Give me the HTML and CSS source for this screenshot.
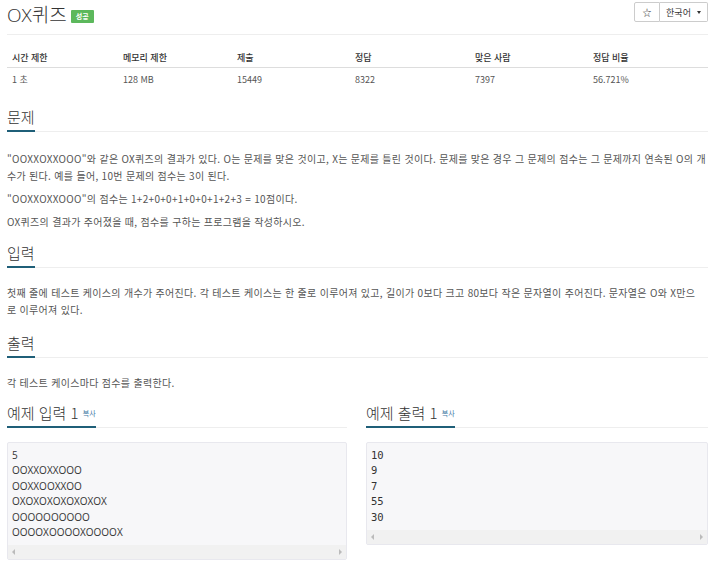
FILE: index.html
```html
<!DOCTYPE html>
<html lang="ko">
<head>
<meta charset="utf-8">
<link rel="stylesheet" href="styles.css">
</head>
<body>
<div class="page">
  <div class="top">
    <h1 class="title">OX퀴즈 <span class="badge">성공</span></h1>
    <div class="btn-group">
      <span class="btn star">☆</span>
      <span class="btn lang">한국어 <span class="caret"></span></span>
    </div>
  </div>

  <div class="stats">
    <div class="th">시간 제한</div><div class="th">메모리 제한</div><div class="th">제출</div><div class="th">정답</div><div class="th">맞은 사람</div><div class="th">정답 비율</div>
    <div class="td">1 초</div><div class="td">128 MB</div><div class="td">15449</div><div class="td">8322</div><div class="td">7397</div><div class="td">56.721%</div>
  </div>

  <section class="sec sec-problem">
    <div class="headline"><h2>문제</h2></div>
    <div class="body">
      <p>"OOXXOXXOOO"와 같은 OX퀴즈의 결과가 있다. O는 문제를 맞은 것이고, X는 문제를 틀린 것이다. 문제를 맞은 경우 그 문제의 점수는 그 문제까지 연속된 O의 개수가 된다. 예를 들어, 10번 문제의 점수는 3이 된다.</p>
      <p>"OOXXOXXOOO"의 점수는 1+2+0+0+1+0+0+1+2+3 = 10점이다.</p>
      <p>OX퀴즈의 결과가 주어졌을 때, 점수를 구하는 프로그램을 작성하시오.</p>
    </div>
  </section>

  <section class="sec sec-input">
    <div class="headline"><h2>입력</h2></div>
    <div class="body">
      <p>첫째 줄에 테스트 케이스의 개수가 주어진다. 각 테스트 케이스는 한 줄로 이루어져 있고, 길이가 0보다 크고 80보다 작은 문자열이 주어진다. 문자열은 O와 X만으로 이루어져 있다.</p>
    </div>
  </section>

  <section class="sec sec-output">
    <div class="headline"><h2>출력</h2></div>
    <div class="body">
      <p>각 테스트 케이스마다 점수를 출력한다.</p>
    </div>
  </section>

  <div class="samples">
    <section class="sample">
      <div class="headline"><h2>예제 입력 1 <a class="copy">복사</a></h2></div>
      <div class="pre sans">
        <div class="code">5
OOXXOXXOOO
OOXXOOXXOO
OXOXOXOXOXOXOX
OOOOOOOOOO
OOOOXOOOOXOOOOX</div>
        <div class="scroll"><span class="arr l"></span><span class="arr r"></span></div>
      </div>
    </section>
    <section class="sample">
      <div class="headline"><h2>예제 출력 1 <a class="copy">복사</a></h2></div>
      <div class="pre mono">
        <div class="code">10
9
7
55
30</div>
        <div class="scroll"><span class="arr l"></span><span class="arr r"></span></div>
      </div>
    </section>
  </div>
</div>
</body>
</html>
```

FILE: styles.css
```css
* { box-sizing: border-box; }
html, body { margin: 0; padding: 0; background: #fff; }
body {
  font-family: "Noto Sans CJK KR", "Noto Sans", sans-serif;
  color: #555;
  font-size: 10px;
}
.page { width: 701px; margin-left: 7px; }

.top {
  display: flex;
  justify-content: space-between;
  align-items: flex-start;
  height: 35px;
  border-bottom: 1px solid #eee;
}
.title {
  margin: 0;
  margin-top: 1px;
  font-family: "Open Sans", "Noto Sans CJK KR", sans-serif;
  font-weight: 300;
  font-size: 19px;
  line-height: 28px;
  color: #333;
  display: flex;
  align-items: center;
  gap: 4px;
}
.badge {
  display: inline-block;
  background: #5cb85c;
  color: #fff;
  font-family: "Noto Sans CJK KR", sans-serif;
  font-size: 7px;
  font-weight: 700;
  line-height: 13px;
  height: 13px;
  padding: 0 5px;
  margin-top: 3px;
  border-radius: 1px;
}
.btn-group { display: flex; margin-top: 2px; }
.btn {
  display: flex;
  align-items: center;
  justify-content: center;
  height: 20px;
  border: 1px solid #ccc;
  background: #fff;
  color: #333;
  font-size: 9px;
}
.star { width: 26px; font-size: 9px; border-radius: 2px 0 0 2px; }
.lang { width: 48px; border-left: 0; border-radius: 0 2px 2px 0; gap: 6px; }
.caret {
  width: 0; height: 0;
  border-left: 2.5px solid transparent;
  border-right: 2.5px solid transparent;
  border-top: 3px solid #333;
  margin-top: 1px;
}

.stats {
  display: grid;
  grid-template-columns: 111px 114px 118px 120px 118px 120px;
  margin-top: 12px;
  font-size: 9px;
}
.th {
  color: #333;
  font-weight: 500;
  padding: 0 5px;
  height: 21px;
  line-height: 21px;
  border-bottom: 1px solid #ddd;
}
.td {
  color: #555;
  padding: 0 5px;
  height: 24px;
  line-height: 24px;
}

.headline {
  border-bottom: 1px solid #eee;
}
.headline h2 {
  display: inline-block;
  margin: 0 0 -1px 0;
  font-size: 15px;
  font-weight: 300;
  color: #333;
  line-height: 20px;
  padding-bottom: 3px;
  border-bottom: 2px solid #1f5f78;
}
.copy {
  font-size: 7px;
  color: #3f79a5;
  font-weight: 400;
  vertical-align: 3px;
}
.body p {
  margin: 0 0 6px 0;
  line-height: 17px;
  color: #555;
  letter-spacing: 0.3px;
}
.sec-problem { margin-top: 15px; }
.sec-problem .body { margin-top: 18px; }
.sec-input { margin-top: 13px; }
.sec-input .body { margin-top: 16px; padding-right: 6px; }
.sec-output { margin-top: 15px; }
.sec-output .body { margin-top: 16px; }

.samples {
  display: grid;
  grid-template-columns: 340px 342px;
  gap: 19px;
  margin-top: 12px;
}
.pre {
  margin-top: 14px;
  background: #f7f7f9;
  border: 1px solid #e8e8ee;
  border-radius: 2px;
}
.code {
  white-space: pre;
  padding: 5px 4px 5px 4px;
  font-size: 10px;
  line-height: 15.4px;
  color: #333;
}
.sans .code { font-family: "Open Sans", "Noto Sans", sans-serif; }
.mono .code { font-family: "DejaVu Sans Mono", monospace; font-size: 10.5px; }
.scroll {
  height: 14px;
  background: #f1f1f1;
  display: flex;
  justify-content: space-between;
  align-items: center;
  padding: 0 4px;
}
.arr { width: 0; height: 0; border-top: 3px solid transparent; border-bottom: 3px solid transparent; }
.arr.l { border-right: 3px solid #bbb; }
.arr.r { border-left: 3px solid #bbb; }
```
